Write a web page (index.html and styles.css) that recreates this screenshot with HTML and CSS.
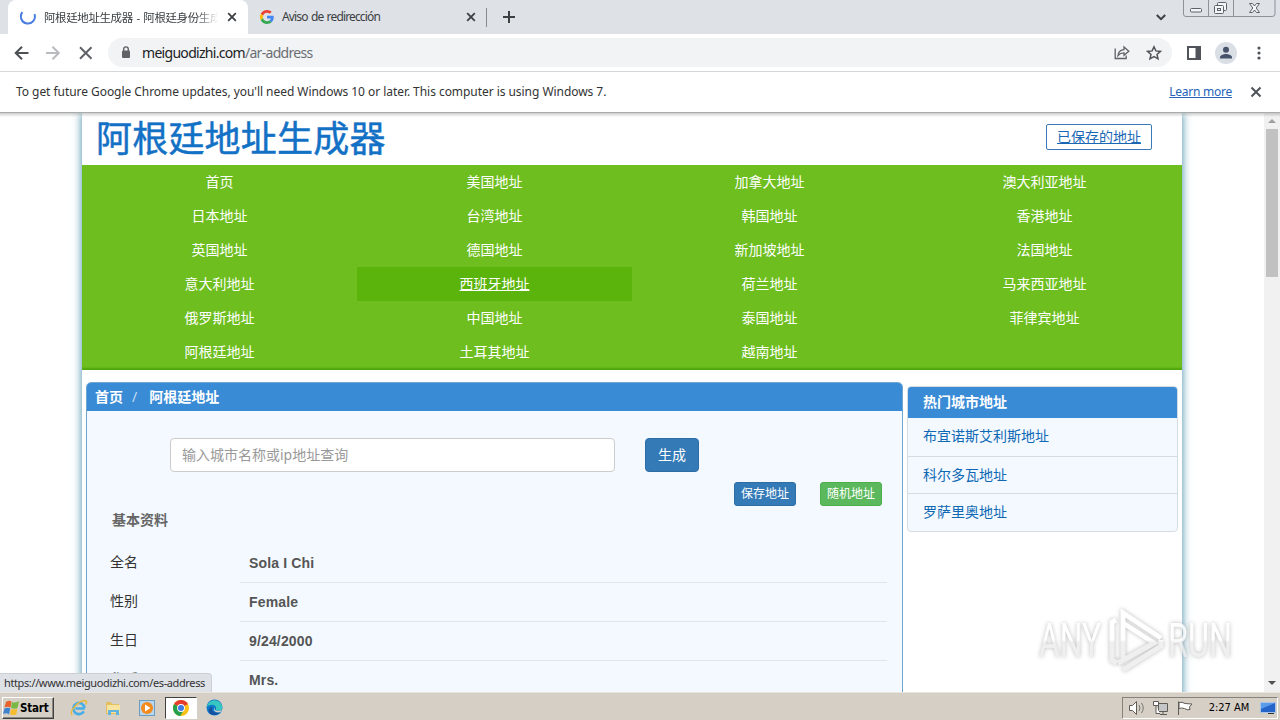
FILE: index.html
```html
<!DOCTYPE html>
<html lang="zh">
<head>
    <meta charset="UTF-8">
    <meta name="viewport" content="width=device-width, initial-scale=1.0">
    <title>阿根廷地址生成器</title>
    <link rel="stylesheet" href="styles.css">
</head>
<body>
    <div class="tabstrip">
        <div class="tab active">
            <svg class="favicon" width="16" height="16" viewBox="0 0 16 16"><path d="M2.4 3.2A7 7 0 1 0 14.5 5.2" fill="none" stroke="#4a7de0" stroke-width="2"/></svg>
            <span class="tab-title fade">阿根廷地址生成器 - 阿根廷身份生成</span>
            <svg class="tab-close" width="10" height="10" viewBox="0 0 10 10"><path d="M1.2 1.2l7.6 7.6M8.8 1.2L1.2 8.8" stroke="#3c4043" stroke-width="1.8"/></svg>
        </div>
        <div class="tab">
            <svg class="favicon" width="14" height="14" viewBox="0 0 48 48">
                <path fill="#ea4335" d="M24 9.5c3.5 0 6.7 1.2 9.2 3.6l6.9-6.9C35.9 2.4 30.5 0 24 0 14.6 0 6.5 5.4 2.6 13.2l8 6.2C12.4 13.7 17.7 9.5 24 9.5z"/>
                <path fill="#4285f4" d="M47 24.6c0-1.600-.2-3.100-.4-4.600H24v9h12.900c-.6 3-2.300 5.500-4.800 7.200l7.700 6C44.400 38 47 31.800 47 24.600z"/>
                <path fill="#fbbc05" d="M10.500 28.600a14.500 14.500 0 0 1 0-9.200l-8-6.200a24 24 0 0 0 0 21.600z"/>
                <path fill="#34a853" d="M24 48c6.500 0 11.900-2.100 15.900-5.800l-7.700-6c-2.200 1.500-4.900 2.300-8.200 2.300-6.300 0-11.600-4.200-13.500-9.900l-8 6.200C6.500 42.600 14.600 48 24 48z"/>
            </svg>
            <span class="tab-title second">Aviso de redirección</span>
            <svg class="tab-close" width="10" height="10" viewBox="0 0 10 10"><path d="M1.2 1.2l7.6 7.6M8.8 1.2L1.2 8.8" stroke="#3c4043" stroke-width="1.8"/></svg>
        </div>
        <div class="divider"></div>
        <svg class="new-tab" width="12" height="12" viewBox="0 0 12 12"><path d="M6 0v12M0 6h12" stroke="#3c4043" stroke-width="2"/></svg>
        <svg class="tab-search" width="10" height="7" viewBox="0 0 10 7"><path d="M.8 1L5 5.2 9.2 1" fill="none" stroke="#3c4043" stroke-width="2"/></svg>
        <svg class="window-buttons" width="93" height="17" viewBox="0 0 93 17">
            <path d="M.5 0v14q0 2.5 2.5 2.5h86q3 0 3-2.5V0M25.500 0v16M50.500 0v16" fill="none" stroke="#8d929b"/>
            <g fill="#f4f5f7" stroke="#5c626c">
                <rect x="7.500" y="8.500" width="11" height="3.500" rx="1"/>
                <rect x="34.500" y="2.500" width="9" height="8" rx="1"/>
                <rect x="31.500" y="5.500" width="9" height="8" rx="1"/>
                <rect x="34.500" y="8.500" width="3" height="2"/>
                <path d="M66.500 3.500h3l2 2.500 2-2.500h3l-3.300 4.500 3.300 4.500h-3l-2-2.500-2 2.500h-3l3.300-4.500z"/>
            </g>
        </svg>
    </div>

    <div class="toolbar">
        <svg class="nav-icons" width="80" height="16" viewBox="0 0 80 16" fill="none" stroke-width="2">
            <path d="M14.500 8H2M8 1.700L1.700 8 8 14.300" stroke="#4d5156"/>
            <path d="M32 8h12.500M38.500 1.700L44.800 8l-6.300 6.300" stroke="#b9bbbe"/>
            <path d="M66 2.200L77.500 13.700M77.500 2.200L66 13.700" stroke="#5f6368"/>
        </svg>
        <div class="omnibox">
            <svg class="lock" width="10" height="13" viewBox="0 0 10 13"><rect x="1" y="4.500" width="8" height="7.500" rx="1" fill="#5f6368"/><path d="M2.700 5V3.200a2.300 2.300 0 0 1 4.600 0V5" fill="none" stroke="#5f6368" stroke-width="1.400"/></svg>
            <span class="url">meiguodizhi.com<span class="path">/ar-address</span></span>
            <svg class="share" width="16" height="15" viewBox="0 0 16 15" fill="none" stroke="#5f6368" stroke-width="1.300"><path d="M1.200 3.500v10h11v-3M4 10.500C4.500 7 6.500 5 10 4.700V2l4.800 4.200L10 10.300V7.800C7.500 7.800 5.500 8.700 4 10.500z"/></svg>
            <svg class="star" width="16" height="16" viewBox="0 0 16 16"><path d="M8 1.800l1.900 4.100 4.500.5-3.400 3 1 4.400L8 11.500l-4 2.300 1-4.400-3.400-3 4.500-.5z" fill="none" stroke="#50545a" stroke-width="1.500"/></svg>
        </div>
        <svg class="panel-icon" width="14" height="14" viewBox="0 0 14 14"><path d="M1 1h12v12H1z" fill="#fff" stroke="#50545a" stroke-width="2"/><path d="M8.500 1H13v12H8.500z" fill="#50545a"/></svg>
        <svg class="avatar" width="22" height="22" viewBox="0 0 22 22"><circle cx="11" cy="11" r="11" fill="#dadfe6"/><circle cx="11" cy="7.800" r="3" fill="#46536b"/><path d="M5 16.500v-1.200c0-2 3.500-3.300 6-3.300s6 1.300 6 3.300v1.200z" fill="#46536b"/></svg>
        <svg class="menu-dots" width="4" height="14" viewBox="0 0 4 14" fill="#50545a"><circle cx="2" cy="2" r="1.600"/><circle cx="2" cy="7" r="1.600"/><circle cx="2" cy="12" r="1.600"/></svg>
    </div>

    <div class="infobar">
        <span class="info-text">To get future Google Chrome updates, you'll need Windows 10 or later. This computer is using Windows 7.</span>
        <a class="learn-more">Learn more</a>
        <svg width="12" height="12" viewBox="0 0 12 12"><path d="M1.500 1.500l9 9M10.500 1.500l-9 9" stroke="#50545a" stroke-width="2"/></svg>
    </div>

    <div class="viewport">
        <div class="page">
            <div class="container">
                <div class="site-header">
                    <h1>阿根廷地址生成器</h1>
                    <a class="saved">已保存的地址</a>
                </div>
                <div class="site-nav">
                    <a>首页</a><a>美国地址</a><a>加拿大地址</a><a>澳大利亚地址</a>
                    <a>日本地址</a><a>台湾地址</a><a>韩国地址</a><a>香港地址</a>
                    <a>英国地址</a><a>德国地址</a><a>新加坡地址</a><a>法国地址</a>
                    <a>意大利地址</a><a class="hover">西班牙地址</a><a>荷兰地址</a><a>马来西亚地址</a>
                    <a>俄罗斯地址</a><a>中国地址</a><a>泰国地址</a><a>菲律宾地址</a>
                    <a>阿根廷地址</a><a>土耳其地址</a><a>越南地址</a>
                </div>
                <div class="content">
                    <div class="main">
                        <div class="breadcrumb"><b>首页</b><span>/</span><b>阿根廷地址</b></div>
                        <div class="search">
                            <input type="text" placeholder="输入城市名称或ip地址查询">
                            <button class="btn">生成</button>
                        </div>
                        <div class="actions">
                            <button class="btn small">保存地址</button>
                            <button class="btn small green">随机地址</button>
                        </div>
                        <h4>基本资料</h4>
                        <div class="row"><label>全名</label><strong>Sola I Chi</strong></div>
                        <div class="row"><label>性别</label><strong>Female</strong></div>
                        <div class="row"><label>生日</label><strong>9/24/2000</strong></div>
                        <div class="row"><label>称呼</label><strong>Mrs.</strong></div>
                    </div>
                    <div class="sidebar">
                        <div class="side-title">热门城市地址</div>
                        <a>布宜诺斯艾利斯地址</a>
                        <a>科尔多瓦地址</a>
                        <a>罗萨里奥地址</a>
                    </div>
                </div>
            </div>
        </div>
        <div class="scrollbar">
            <svg width="16" height="15" viewBox="0 0 16 15"><path d="M4 10l4-4 4 4z" fill="#a0a0a0"/></svg>
            <div class="thumb"></div>
            <svg class="down" width="16" height="17" viewBox="0 0 16 17"><path d="M4 6l4 4 4-4z" fill="#505050"/></svg>
        </div>
        <div class="status">https://www.meiguodizhi.com/es-address</div>
        <svg class="watermark" width="210" height="66" viewBox="0 0 210 66">
            <defs>
                <linearGradient id="shade" gradientUnits="userSpaceOnUse" x1="0" y1="0" x2="0" y2="66">
                    <stop offset="0.48" stop-color="#fff"/>
                    <stop offset="0.52" stop-color="#ececec"/>
                </linearGradient>
            </defs>
            <text x="3" y="49" textLength="62" lengthAdjust="spacingAndGlyphs">ANY</text>
            <text x="132" y="49" textLength="64" lengthAdjust="spacingAndGlyphs">RUN</text>
            <path d="M80 12l-4 2v38l5 3M87 50V5l38 25M87 15l31 20-36 20M87 62l38-24v-6"/>
        </svg>
    </div>

    <div class="taskbar">
        <div class="start">
            <svg width="17" height="16" viewBox="0 0 17 16"><path d="M3 2q3-2 5.500-.5L7.500 7.500Q4.500 6 1.500 7.500z" fill="#e8622c"/><path d="M9 2q3 1.500 7-1l-1.500 7q-3 1.500-6.500-.2z" fill="#79b843"/><path d="M1.500 8.500q3-1.500 5.800-.2L6 14.500Q3.500 12.500 0 14z" fill="#3d83cf"/><path d="M8 8.700q3 1.500 6.300 0l-1 5.800q-3 1.500-6.300 0z" fill="#f5bd2d"/></svg>
            Start
        </div>
        <svg class="task-icon" width="18" height="18" viewBox="0 0 18 18"><path d="M14.800 9.500H5.500M14.500 9A5.600 5.600 0 1 0 13.800 12.300" fill="none" stroke="#45aee8" stroke-width="2.600"/><path d="M2 16C-1 12 8 2 15 1.500q3 .5.5 4" fill="none" stroke="#e8b83a" stroke-width="1.400"/></svg>
        <svg class="task-icon" width="18" height="18" viewBox="0 0 18 18"><path d="M2 3h5l1 2h7v10H2z" fill="#e3bf62"/><path d="M3 6h13v8H3z" fill="#f8e49f"/><path d="M4 16v-5h11v5h-3v-3H7v3z" fill="#62b4dc"/></svg>
        <svg class="task-icon" width="18" height="18" viewBox="0 0 18 18"><rect x="1.500" y="1.500" width="15" height="15" fill="#b9d7ec" stroke="#6b9cc2"/><circle cx="9" cy="9" r="6" fill="#f28a1d"/><path d="M7 5.500v7l5.500-3.500z" fill="#fff"/></svg>
        <div class="task-active">
            <svg width="16" height="16" viewBox="0 0 16 16"><circle cx="8" cy="8" r="8" fill="#fbc116"/><path d="M8 8L1.100 4a8 8 0 0 1 13.800 0z" fill="#e33b2e"/><path d="M8 8L1.100 4A8 8 0 0 0 7.300 16l3.500-6z" fill="#269f4c"/><circle cx="8" cy="8" r="3.900" fill="#fff"/><circle cx="8" cy="8" r="3" fill="#3e7be6"/></svg>
        </div>
        <svg class="edge" width="17" height="17" viewBox="0 0 17 17"><circle cx="8.500" cy="8.500" r="8" fill="#0d79c9"/><path d="M.6 8A8 8 0 0 1 16.400 8q.2 3.500-4 3.500-3 0-2.400-2C11 6 4 4 .6 8z" fill="#38c6c1"/><path d="M6.500 8c-2 4 2 7 7.500 5-3 4-9 4-11 0-1-3 1-5 3.500-5z" fill="#174f9c"/><path d="M8.500 8c-1 3 2 4.500 6 3.500l2-1-2 2.500c-4 1.500-8-1-6-5z" fill="#d6d0c7"/></svg>
        <div class="tray">
            <svg width="66" height="18" viewBox="0 0 66 18" fill="#fff" stroke="#5e5b57">
                <path d="M1.500 6.500h3l4-4v13l-4-4h-3z"/>
                <path d="M11 6q2 3 0 6M13.500 4q3.500 5 0 10" fill="none" stroke="#77746f"/>
                <path d="M30.500 4.500h9v8h-9zM32 15.500h7M35 13v2" fill="#c3c5c6"/>
                <path d="M25.500 2.500h5v4h-5zM28 7v7.500h4"/>
                <path d="M50.500 16V2.500M51 3.500q3-1 6 1l7 .5-2.500 3 .5 2.500q-3 1-5.500-1-3-1-5.500 0z"/>
            </svg>
            <span class="clock">2:27 AM</span>
            <svg width="16" height="16" viewBox="0 0 16 16"><rect x=".5" y="2.500" width="15" height="10" fill="#2564c8" stroke="#a8c4e6"/><path d="M1 3h14L1 9z" fill="#5c9bea"/><path d="M8 13.500h6" stroke="#333"/></svg>
        </div>
    </div>
</body>
</html>
```

FILE: styles.css
```css
* {
    box-sizing: border-box;
}

body {
    margin: 0;
    width: 1280px;
    height: 720px;
    overflow: hidden;
    display: flex;
    flex-direction: column;
    background: #fff;
    font-family: "Noto Sans", "Noto Sans CJK SC", sans-serif;
    color: #333;
}

svg {
    display: block;
    flex-shrink: 0;
}

/* browser */
.tabstrip {
    height: 34px;
    flex-shrink: 0;
    display: flex;
    align-items: center;
    padding-left: 8px;
    background: #dee1e6;
    font-size: 12px;
}

.tab {
    height: 34px;
    width: 238px;
    display: flex;
    align-items: center;
    padding: 0 10px 0 12px;
}

.tab.active {
    width: 240px;
    padding-right: 11px;
    background: #fff;
    border-radius: 8px 8px 0 0;
}

.tab-title {
    flex: 1;
    margin-left: 8px;
    padding-bottom: 1px;
    white-space: nowrap;
    overflow: hidden;
    color: #3c4043;
}

.tab-title.second {
    letter-spacing: -0.85px;
    word-spacing: 1px;
}

.fade {
    font-size: 11.5px;
    letter-spacing: -0.4px;
    word-spacing: 1px;
    -webkit-mask-image: linear-gradient(to right, #000 88%, transparent);
    mask-image: linear-gradient(to right, #000 88%, transparent);
}

.tab-close {
    margin-left: 9px;
}

.divider {
    width: 1px;
    height: 19px;
    background: #85898f;
}

.new-tab {
    margin-left: 16px;
}

.tab-search {
    margin-left: auto;
}

.window-buttons {
    align-self: flex-start;
    margin: 0 4px 0 17px;
}

.toolbar {
    height: 38px;
    flex-shrink: 0;
    display: flex;
    align-items: center;
    padding-left: 14px;
    border-bottom: 1px solid #d5d8db;
}

.omnibox {
    width: 1064px;
    height: 29px;
    margin-left: 14px;
    padding: 0 10px 0 13px;
    display: flex;
    align-items: center;
    border-radius: 15px;
    background: #f1f3f4;
}

.url {
    flex: 1;
    margin-left: 11px;
    font-size: 14px;
    letter-spacing: -0.7px;
    color: #202124;
}

.path {
    color: #6b6f74;
}

.share {
    margin-right: 16px;
}

.panel-icon {
    margin-left: 15px;
}

.avatar {
    margin-left: 14px;
}

.menu-dots {
    margin-left: 20px;
}

.infobar {
    height: 41px;
    flex-shrink: 0;
    display: flex;
    align-items: center;
    padding: 0 18px 0 16px;
    font-size: 12px;
    border-bottom: 1px solid #a9abad;
}

.info-text {
    flex: 1;
    padding-bottom: 2px;
    letter-spacing: -0.05px;
}

.learn-more {
    margin-right: 18px;
    padding-bottom: 2px;
    letter-spacing: -0.25px;
    color: #2463b8;
    text-decoration: underline;
}

/* web page */
.viewport {
    position: relative;
    height: 579px;
    flex-shrink: 0;
    display: flex;
    overflow: hidden;
}

.page {
    flex: 1;
    display: flex;
    justify-content: center;
    background: linear-gradient(#ccc, #fff 4px);
    font-size: 14px;
}

.container {
    width: 1100px;
    height: 620px;
    box-shadow: 0 0 9px #3f88a5;
}

.site-header {
    height: 52px;
    display: flex;
    justify-content: space-between;
    padding: 0 30px 0 14px;
}

.site-header h1 {
    margin: 0;
    font-size: 36px;
    line-height: 52px;
    letter-spacing: 0.2px;
    font-weight: 400;
    color: #1371c5;
    -webkit-text-stroke: 0.5px #1371c5;
}

.saved {
    width: 106px;
    height: 26px;
    margin-top: 11px;
    line-height: 24px;
    text-align: center;
    border: 1px solid #3a7ab8;
    border-radius: 2px;
    color: #1b67b3;
    text-decoration: underline;
}

.site-nav {
    display: grid;
    grid-template-columns: repeat(4, 1fr);
    padding-bottom: 1px;
    background: #6dbe1e;
    box-shadow: inset 0 -3px 2px -1px #4fa60b;
}

.site-nav a {
    height: 34px;
    line-height: 34px;
    text-align: center;
    color: #fff;
}

.site-nav .hover {
    background: #5bb40b;
    text-decoration: underline;
}

.content {
    display: flex;
    align-items: flex-start;
    padding: 12px 4px 0;
}

.main {
    width: 817px;
    height: 400px;
    border: 1px solid #6fa5ce;
    border-radius: 5px;
    background: #f3f9ff;
}

.breadcrumb {
    height: 28px;
    line-height: 28px;
    padding-left: 8px;
    border-radius: 4px 4px 0 0;
    background: #398bd6;
    color: #fff;
}

.breadcrumb span {
    margin: 0 12px 0 9px;
    color: #c5dcf1;
}

.search {
    display: flex;
    margin: 27px 0 10px 83px;
}

.search input {
    width: 445px;
    height: 34px;
    margin-right: 30px;
    padding: 0 11px 2px;
    border: 1px solid #ccc;
    border-radius: 4px;
    font: inherit;
}

.search input::placeholder {
    color: #999;
}

.btn {
    width: 54px;
    height: 34px;
    padding: 0 0 2px;
    border: 1px solid #2e6da4;
    border-radius: 4px;
    background: #337ab7;
    color: #fff;
    font: inherit;
}

.btn.small {
    width: 62px;
    height: 24px;
    padding: 0;
    border-radius: 3px;
    font-size: 12px;
    line-height: 20px;
}

.btn.green {
    background: #5cb85c;
    border-color: #4cae4c;
}

.actions {
    display: flex;
    justify-content: flex-end;
    gap: 24px;
    margin-right: 20px;
}

.main h4 {
    margin: 3px 0 14px 25px;
    font-size: 14px;
    line-height: 21px;
    color: #666;
}

.row {
    height: 39px;
    display: flex;
    padding: 0 15px 0 23px;
}

.row label {
    width: 130px;
    line-height: 35px;
}

.row strong {
    flex: 1;
    padding-left: 9px;
    line-height: 39px;
    border-bottom: 1px solid #dfe5ea;
    font-family: "Liberation Sans", sans-serif;
    letter-spacing: 0.15px;
    color: #555;
}

.sidebar {
    width: 271px;
    margin: 4px 0 0 4px;
    border: 1px solid #d5dde3;
    border-radius: 4px;
    overflow: hidden;
    background: #f3f9ff;
}

.side-title {
    height: 31px;
    line-height: 29px;
    padding-left: 15px;
    background: #398bd6;
    color: #fff;
    font-weight: 700;
}

.sidebar a {
    display: block;
    height: 37.5px;
    line-height: 36px;
    padding-left: 15px;
    color: #0e68b4;
}

.sidebar a + a {
    line-height: 35px;
    border-top: 1px solid #d5dde3;
}

.scrollbar {
    width: 16px;
    display: flex;
    flex-direction: column;
    background: linear-gradient(#c4c4c4, #f1f1f1 4px);
}

.thumb {
    width: 12px;
    height: 148px;
    margin: 1px auto 0;
    background: #c1c1c1;
}

.down {
    margin-top: auto;
}

.status {
    position: absolute;
    left: 0;
    bottom: 0;
    width: 212px;
    height: 19px;
    padding-left: 4px;
    line-height: 17px;
    border-top: 1px solid #ccd0d5;
    border-right: 1px solid #ccd0d5;
    border-radius: 0 4px 0 0;
    background: #dee1e6;
    font-size: 11px;
    letter-spacing: -0.38px;
    white-space: nowrap;
}

.watermark {
    position: absolute;
    left: 1036px;
    top: 495px;
    filter: drop-shadow(0 0 2px #aaa);
    opacity: 0.8;
}

.watermark text {
    font-family: Roboto, sans-serif;
    font-size: 49px;
    fill: url(#shade);
}

.watermark path {
    fill: none;
    stroke: url(#shade);
    stroke-width: 5;
}

/* taskbar */
.taskbar {
    height: 28px;
    flex-shrink: 0;
    display: flex;
    align-items: center;
    padding: 2px 2px 0;
    background: #d5cfc6;
    border-top: 1px solid #e8e5df;
    font-family: "DejaVu Sans Condensed", "DejaVu Sans", sans-serif;
    font-size: 11px;
    color: #000;
}

.start {
    width: 52px;
    height: 22px;
    display: flex;
    align-items: center;
    border: 1px solid;
    border-color: #fff #404040 #404040 #fff;
    box-shadow: inset -1px -1px #8b8781;
    font-size: 11.5px;
    font-weight: 700;
    letter-spacing: -0.2px;
}

.task-icon {
    margin-left: 16px;
}

.task-active {
    width: 32px;
    height: 22px;
    margin-left: 9px;
    display: flex;
    align-items: center;
    justify-content: center;
    background: #fff;
    border: 1px solid;
    border-color: #404040 #fff #fff #404040;
}

.edge {
    margin-left: 9px;
}

.tray {
    width: 156px;
    height: 22px;
    margin-left: auto;
    display: flex;
    align-items: center;
    padding: 0 1px 0 5px;
    border: 1px solid;
    border-color: #85817b #fff #fff #85817b;
}

.clock {
    flex: 1;
    text-align: center;
    padding-left: 4px;
}
```
